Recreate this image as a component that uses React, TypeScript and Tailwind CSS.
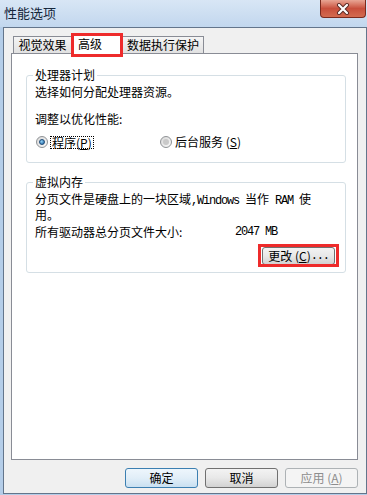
import type { ReactNode } from "react";

function Radio({ checked }: { checked?: boolean }) {
  return (
    <span className="w-[12px] h-[12px] rounded-full border border-[#8f9295] bg-gradient-to-br from-[#d9d9d9] to-[#fafafa] flex items-center justify-center shrink-0">
      {checked ? (
        <span className="w-[6px] h-[6px] rounded-full border border-[#1c4a77] bg-[radial-gradient(circle_at_35%_35%,#8fd0f6,#1f64a3)]" />
      ) : (
        <span className="w-[6px] h-[6px] rounded-full bg-[#c9c9c9]" />
      )}
    </span>
  );
}

function Btn({
  children,
  kind = "normal",
}: {
  children: ReactNode;
  kind?: "default" | "normal" | "disabled";
}) {
  const styles = {
    default:
      "border-[#3c7fb1] bg-gradient-to-b from-[#eef6fc] via-[#e1eef8] to-[#c9e0f1] text-black",
    normal:
      "border-[#707070] bg-gradient-to-b from-[#f3f3f3] via-[#e8e8e8] to-[#d2d2d2] text-black",
    disabled: "border-[#adb2b5] bg-[#f4f4f4] text-[#8d8d8d]",
  }[kind];
  return (
    <div
      className={`w-[73px] h-[20px] rounded-[3px] border flex items-center justify-center ${styles}`}
    >
      {children}
    </div>
  );
}

const mono = "font-['Liberation_Mono',monospace] tracking-[-1.2px]";

export default function App() {
  return (
    <div className="w-[367px] h-[495px] bg-[#b4cde8] flex flex-col overflow-hidden font-['Noto_Sans_CJK_SC',sans-serif] text-[12px] leading-[14px] text-black">
      {/* title bar */}
      <div className="h-[27px] shrink-0 flex justify-between bg-gradient-to-b from-[#d8e6f5] to-[#c2d7ee]">
        <span className="pl-[4px] pt-[5px] text-[13px] leading-[15px] text-[#15263a]">
          性能选项
        </span>
        <div className="w-[46px] h-[18px] mr-[1px] rounded-b-[4px] border border-t-0 border-[#7a2a1e] bg-gradient-to-b from-[#e8a594] via-[#c84f3c] to-[#d36b50] flex items-center justify-center">
          <svg width="14" height="12" viewBox="0 0 14 12">
            <path d="M3 2 L11 10 M11 2 L3 10" stroke="#5a2a24" strokeWidth="4" strokeLinecap="round" />
            <path d="M3 2 L11 10 M11 2 L3 10" stroke="#ffffff" strokeWidth="2.2" strokeLinecap="round" />
          </svg>
        </div>
      </div>

      {/* client area */}
      <div className="ml-[3px] h-[467px] shrink-0 border border-[#63758b] bg-[#f0f0f0] pt-[6px] pl-[7px] pr-[8px] flex flex-col">
        {/* tabs */}
        <div className="h-[20px] flex items-end pl-[2px]">
          <div className="w-[59px] h-[17px] mb-px border border-b-0 border-[#898c95] bg-gradient-to-b from-[#f5f5f5] to-[#e1e1e1] flex items-center justify-center">
            视觉效果
          </div>
          <div className="relative z-10 w-[51px] h-[20px] border border-b-0 border-[#898c95] bg-white flex items-start pt-[2px] pl-[5px]">
            高级
            <div className="absolute -left-[2px] -top-[2px] w-[52px] h-[24px] border-[3px] border-[#ee2b2b]" />
          </div>
          <div className="w-[81px] h-[17px] mb-px border border-b-0 border-l-0 border-[#898c95] bg-gradient-to-b from-[#f5f5f5] to-[#e1e1e1] flex items-center justify-center">
            数据执行保护
          </div>
        </div>

        {/* tab panel */}
        <div className="-mt-px h-[407px] border border-[#898c95] bg-white pt-[14px]">
          <fieldset className="ml-[14px] mr-[11px] border border-[#d5dfe5] rounded-[3px] pl-[8px] pb-[13px]">
            <legend className="-ml-[2px] px-[2px]">处理器计划</legend>
            <div className="pt-[3px]">选择如何分配处理器资源。</div>
            <div className="mt-[13px]">调整以优化性能:</div>
            <div className="mt-[9px] h-[14px] flex items-center">
              <div className="w-[125px] flex items-center">
                <span className="ml-px">
                  <Radio checked />
                </span>
                <span className="ml-[2px] px-px border border-dotted border-black leading-[11px]">
                  程序(<span className="underline">P</span>)
                </span>
              </div>
              <Radio />
              <span className="ml-[3px]">
                后台服务 (<span className="underline">S</span>)
              </span>
            </div>
          </fieldset>

          <fieldset className="mt-[12px] ml-[14px] mr-[11px] border border-[#d5dfe5] rounded-[3px] pl-[8px] pr-[10px] pb-[7px]">
            <legend className="-ml-[2px] px-[2px]">虚拟内存</legend>
            <div className="pt-[3px]">
              分页文件是硬盘上的一块区域<span className={mono}>,</span>
              <span className={mono}>Windows </span>当作<span className={mono}> RAM </span>使
              <br />
              用。
            </div>
            <div className="mt-[3px] flex">
              <span className="w-[200px]">所有驱动器总分页文件大小:</span>
              <span className={mono}>2047 MB</span>
            </div>
            <div className="mt-[8px] flex justify-end">
              <div className="relative w-[73px] h-[18px] rounded-[3px] border border-[#707070] bg-gradient-to-b from-[#f3f3f3] via-[#e8e8e8] to-[#d2d2d2] flex items-center justify-center">
                更改 (<span className="underline">C</span>)<span className={mono}>...</span>
                <div className="absolute -left-[5px] -right-[5px] -top-[4px] -bottom-[3px] border-[3px] border-[#ee2b2b]" />
              </div>
            </div>
          </fieldset>
        </div>

        {/* dialog buttons */}
        <div className="mt-[8px] flex justify-end gap-[7px]">
          <Btn kind="default">确定</Btn>
          <Btn>取消</Btn>
          <Btn kind="disabled">
            应用 (<span className="underline">A</span>)
          </Btn>
        </div>
      </div>
    </div>
  );
}
